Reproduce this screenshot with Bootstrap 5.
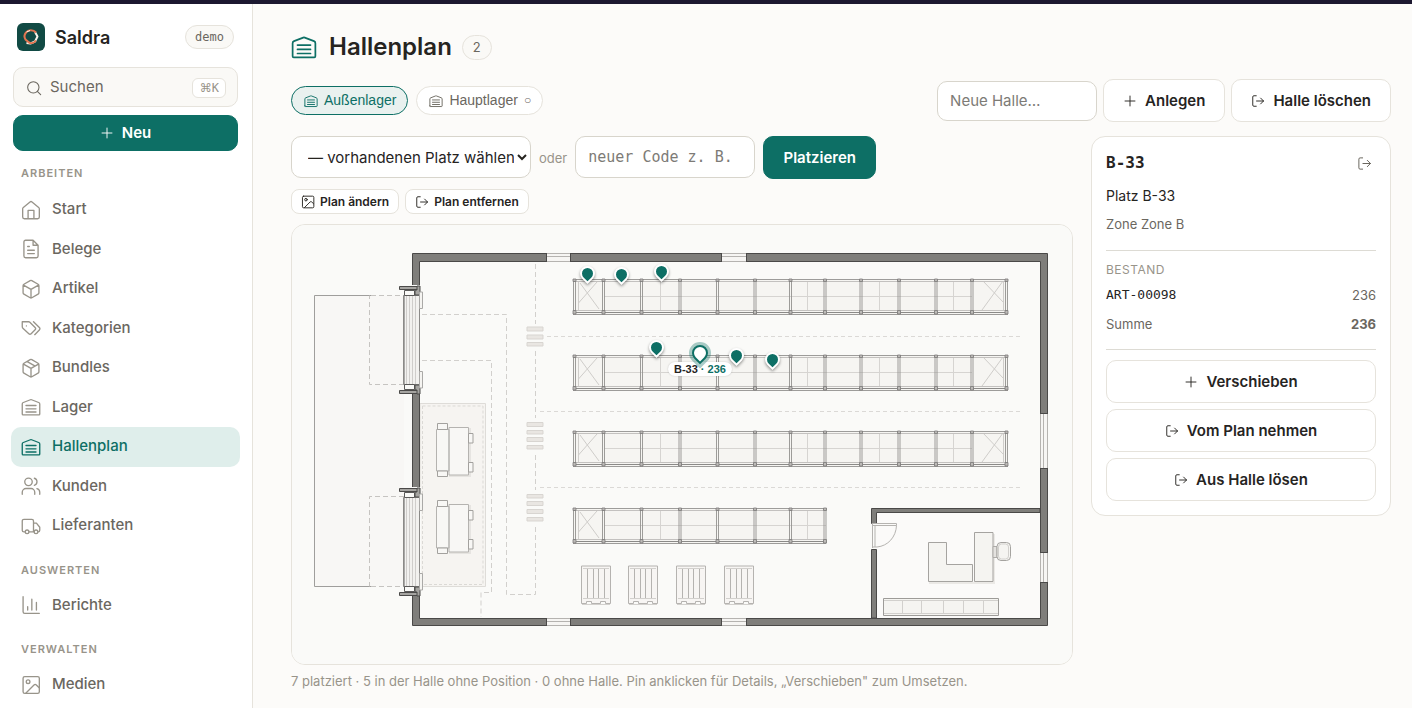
<!DOCTYPE html>
<html lang="de">
<head>
<meta charset="utf-8">
<meta name="viewport" content="width=device-width, initial-scale=1">
<title>Hallenplan · Saldra</title>
<link href="https://cdn.jsdelivr.net/npm/bootstrap@5.3.0/dist/css/bootstrap.min.css" rel="stylesheet">
<style>
:root{--teal:#0d6f65;--ink:#26241f;--muted:#6b675f;--faint:#98948a;--line:#e6e3dc;--line2:#d8d5cc;--paper:#fcfbf9}
body{font-family:Inter,"Open Sans",sans-serif;font-size:15px;line-height:1.5;color:var(--ink);background:var(--paper);border-top:4px solid #1c1830}
svg.ico{fill:none;stroke:currentColor;stroke-width:1.6;stroke-linecap:round;stroke-linejoin:round;flex:none}
.mono{font-family:"DejaVu Sans Mono","Liberation Mono",monospace}
.side{width:253px;background:#fff;border-right:1px solid var(--line);padding:19px 12px 0 11px;min-height:calc(100vh - 4px)}
.brand-row{padding:0 6px;gap:10px;height:28px}
.brand-name{font-size:18px;font-weight:600;color:var(--ink)}
.tagpill{border:1px solid var(--line);background:#faf9f6;color:var(--muted);font-size:12px;line-height:22px;padding:0 9px}
.search{width:calc(100% - 4px);margin:16px 2px 8px;height:40px;border:1px solid var(--line);background:#faf9f6;border-radius:10px;color:var(--muted);padding:1px 11px 0 12px;gap:8px;text-align:left}
.kbd-hint{border:1px solid var(--line);background:#fff;border-radius:6px;font-size:12px;line-height:18px;color:var(--faint);padding:0 6px 0 7px}
.kbd-hint b{font-family:"DejaVu Sans",sans-serif;font-weight:400}
.btn-teal{--bs-btn-bg:var(--teal);--bs-btn-color:#fff;--bs-btn-border-color:var(--teal);--bs-btn-hover-bg:#0a5d55;--bs-btn-hover-color:#fff;--bs-btn-border-radius:10px;--bs-btn-font-size:15px;--bs-btn-font-weight:600}
.btn-new{margin:0 2px;height:36px;gap:8px}
.btn-place{width:113px;height:43px;padding:1px 0 0}
.sec{font-size:11px;font-weight:600;letter-spacing:1px;line-height:17px;color:var(--faint);padding:16px 10px 7px;margin:0}
.sec-first{padding-top:14px;padding-bottom:8px}
.side .nav-link{display:flex;align-items:center;gap:11px;padding:8px 10px 9px;color:var(--muted);font-weight:500;border-radius:10px}
.side .nav-link svg{color:var(--faint);margin-top:1px}
.side .nav-link.active,.side .nav-link.active svg{color:var(--teal)}
.side .nav-link.active{background:#dfeeeb}
.content{padding:27px 21px 16px 38px}
h1{font-size:24px;font-weight:600;line-height:32px;margin:0 10px 0 12px}
.count{border:1px solid var(--line);background:#faf9f6;color:var(--muted);font-size:13px;line-height:23px;padding:0 10px}
.chip{font-family:"Liberation Sans",Arial,sans-serif;font-size:14px;line-height:27px;padding:0 11px 0 12px;border:1px solid var(--line);background:#fff;color:var(--muted);border-radius:16px;gap:6px}
.chip.on{background:#e9f1ef;border-color:var(--teal);color:var(--teal)}
.chip small{font-size:12px}
.field{border:1px solid var(--line2);border-radius:10px;background:#fff;font-size:15px;color:var(--ink);padding:0 12px;height:42px}
.field::placeholder{color:#7d7b76}
.field-hall{width:160px;height:40px}
.field-spot{width:240px;padding:1px 0 0 12px}
.field-code{width:180px}
.btn-line{--bs-btn-bg:#fff;--bs-btn-color:var(--ink);--bs-btn-border-color:var(--line);--bs-btn-hover-bg:#f5f3ee;--bs-btn-hover-border-color:var(--line2);--bs-btn-border-radius:10px;--bs-btn-font-size:15px;--bs-btn-font-weight:600;height:43px;gap:8px;padding:1px 19px 0}
.btn-mini{height:25px;font-size:12px;gap:5px;padding:0 9px;--bs-btn-border-radius:8px}
.gap-6{gap:6px}
.workarea{display:grid;grid-template-columns:minmax(0,1fr) 300px;gap:18px;margin-top:14px}
.hint{font-size:13px;line-height:20px;color:var(--faint)}
.plan{position:relative;border:1px solid var(--line);border-radius:14px;background:#fafaf8;margin:10px 0 6px;overflow:hidden}
.plan>svg{display:block;width:100%}
.pin{position:absolute;width:15px;height:15px;margin:-8px 0 0 -8px;padding:0;background:var(--teal);border:2px solid #fff;border-radius:50% 50% 0 50%;transform:rotate(45deg);box-shadow:1px 1px 3px #0006}
.pin.sel{width:16px;height:16px;background:#fff;border-color:var(--teal);box-shadow:0 0 0 3px #0d6f6559}
.pin-label{position:absolute;transform:translate(-50%,-50%);font:bold 11px/14px "Liberation Sans",Arial,sans-serif;background:#fff;border-radius:7px;padding:0 6px;white-space:nowrap;box-shadow:0 0 2px #0003}
.pin-label span{color:var(--teal)}
.detail{border:1px solid var(--line);border-radius:14px;background:#fff;padding:14px}
.detail hr{margin:0;border-color:#d5d2c9;opacity:.8}
.detail h2{font-size:16px;line-height:24px;font-weight:700;margin:0}
.txt14{font-size:14px;line-height:21px}
.txt13{font-size:13px;line-height:20px}
.overline{font-size:12px;line-height:20px;letter-spacing:.5px;color:var(--faint)}
.muted{color:var(--muted)}
</style>
</head>
<body>
<svg width="0" height="0" class="d-block" aria-hidden="true">
<symbol id="i-hall" viewBox="0 0 24 24"><path d="M1.500 20.500v-12a2 2 0 0 1 1.300-1.900l8.500-3.300a2 2 0 0 1 1.400 0l8.500 3.300a2 2 0 0 1 1.300 1.900v12a1 1 0 0 1-1 1h-19a1 1 0 0 1-1-1zM6 10.200h12M6 14.200h12M6 18h12"/></symbol>
<symbol id="i-home" viewBox="0 0 24 24"><path d="M2 10.500a2 2 0 0 1 .8-1.600l8-6.600a2 2 0 0 1 2.400 0l8 6.600a2 2 0 0 1 .8 1.600v10a2 2 0 0 1-2 2h-16a2 2 0 0 1-2-2zM8.500 22v-9.500h7v9.500"/></symbol>
<symbol id="i-doc" viewBox="0 0 24 24"><path d="M14.500 1.500h-9a2 2 0 0 0-2 2v17a2 2 0 0 0 2 2h13a2 2 0 0 0 2-2v-13zM14.500 1.500v6h6M8 9h2M8 13.500h8M8 17.500h8"/></symbol>
<symbol id="i-box" viewBox="0 0 24 24"><path d="M21.500 8a2 2 0 0 0-1-1.700l-7.500-4.300a2 2 0 0 0-2 0L3.500 6.300a2 2 0 0 0-1 1.700v8.500a2 2 0 0 0 1 1.700l7.500 4.300a2 2 0 0 0 2 0l7.500-4.300a2 2 0 0 0 1-1.700zM3 7.300l9 5.200 9-5.200M12 22.500v-10"/></symbol>
<symbol id="i-bundle" viewBox="0 0 24 24"><path d="M21.500 8a2 2 0 0 0-1-1.700l-7.500-4.300a2 2 0 0 0-2 0L3.500 6.300a2 2 0 0 0-1 1.700v8.500a2 2 0 0 0 1 1.700l7.500 4.300a2 2 0 0 0 2 0l7.500-4.300a2 2 0 0 0 1-1.700zM3 7.300l9 5.200 9-5.200M12 22.500v-10M7.500 4.300l9 5.200"/></symbol>
<symbol id="i-tags" viewBox="0 0 24 24"><path d="M1.500 4.500h7.700a2 2 0 0 1 1.400.6l6.300 6.300a2 2 0 0 1 0 2.800l-4.700 4.700a2 2 0 0 1-2.800 0l-6.800-6.300a3.500 3.500 0 0 1-1.100-2.500zM15 4.500l7 7a2 2 0 0 1 0 2.800L16.500 20M6.500 9.500h.01"/></symbol>
<symbol id="i-users" viewBox="0 0 24 24"><circle cx="9" cy="7" r="4.500"/><path d="M1.500 22v-2.500a4.500 4.500 0 0 1 4.500-4.500h6a4.500 4.500 0 0 1 4.500 4.500V22M16 2.700a4.500 4.500 0 0 1 0 8.600M22.500 22v-2.500a4.500 4.500 0 0 0-3.400-4.300"/></symbol>
<symbol id="i-truck" viewBox="0 0 24 24"><path d="M5 19H3.500a2 2 0 0 1-2-2V6a2 2 0 0 1 2-2H13a2 2 0 0 1 2 2v13H9.500M15 8.500h3.500l4 5V17a2 2 0 0 1-2 2M15 19h1"/><circle cx="7.300" cy="19" r="2.200"/><circle cx="18" cy="19" r="2.200"/></symbol>
<symbol id="i-chart" viewBox="0 0 24 24"><path d="M2.500 2v18a2 2 0 0 0 2 2H22M8 18v-4M13 18V5M18.500 18V9"/></symbol>
<symbol id="i-img" viewBox="0 0 24 24"><rect x="2.500" y="2" width="19.500" height="20" rx="2"/><circle cx="8.500" cy="8" r="2.200"/><path d="M21.500 15l-3.100-3.100a2 2 0 0 0-2.800 0L6 21.500"/></symbol>
<symbol id="i-exit" viewBox="0 0 24 24"><path d="M9 3H5a2 2 0 0 0-2 2v14a2 2 0 0 0 2 2h4M16.500 17l5-5-5-5M21.500 12H9.500"/></symbol>
<symbol id="i-plus" viewBox="0 0 24 24"><path d="M12 3.500v17M3.500 12h17"/></symbol>
<symbol id="i-find" viewBox="0 0 24 24"><circle cx="11" cy="11" r="8.500"/><path d="M22 22l-5-5"/></symbol>
</svg>

<div class="d-flex">
<aside class="side flex-shrink-0">
  <div class="brand-row d-flex align-items-center">
    <svg width="28" height="28" viewBox="0 0 28 28" aria-hidden="true"><rect width="28" height="28" rx="6" fill="#114a44"/><path d="M18 9 20.500 13.500 18 18.500 13.500 20.500 9.500 20" fill="none" stroke="#fbf4ea" stroke-width="2" stroke-linejoin="round"/><path d="M19 9.500C16.500 6.500 11 6.600 9 9.500 7.300 11.500 7.300 14.500 8.500 16.500L12 19.500C14.500 20.800 17.500 19.500 19 17.500" fill="none" stroke="#e07450" stroke-width="2"/><path d="M9.500 9 13 7.500" stroke="#fbf4ea"/></svg>
    <span class="brand-name">Saldra</span>
    <span class="tagpill mono rounded-pill ms-auto">demo</span>
  </div>
  <button type="button" class="search d-flex align-items-center">
    <svg class="ico" width="16" height="16"><use href="#i-find"/></svg><span>Suchen</span><span class="kbd-hint mono ms-auto"><b>⌘</b>K</span>
  </button>
  <div class="d-grid"><button type="button" class="btn btn-teal btn-new d-flex align-items-center justify-content-center p-0"><svg class="ico" width="14" height="14"><use href="#i-plus"/></svg>Neu</button></div>
  <nav>
    <p class="sec sec-first">ARBEITEN</p>
    <div class="nav flex-column flex-nowrap">
      <a class="nav-link" href="#"><svg class="ico" width="20" height="20"><use href="#i-home"/></svg>Start</a>
      <a class="nav-link" href="#"><svg class="ico" width="20" height="20"><use href="#i-doc"/></svg>Belege</a>
      <a class="nav-link" href="#"><svg class="ico" width="20" height="20"><use href="#i-box"/></svg>Artikel</a>
      <a class="nav-link" href="#"><svg class="ico" width="20" height="20"><use href="#i-tags"/></svg>Kategorien</a>
      <a class="nav-link" href="#"><svg class="ico" width="20" height="20"><use href="#i-bundle"/></svg>Bundles</a>
      <a class="nav-link" href="#"><svg class="ico" width="20" height="20"><use href="#i-hall"/></svg>Lager</a>
      <a class="nav-link active" aria-current="page" href="#"><svg class="ico" width="20" height="20"><use href="#i-hall"/></svg>Hallenplan</a>
      <a class="nav-link" href="#"><svg class="ico" width="20" height="20"><use href="#i-users"/></svg>Kunden</a>
      <a class="nav-link" href="#"><svg class="ico" width="20" height="20"><use href="#i-truck"/></svg>Lieferanten</a>
    </div>
    <p class="sec">AUSWERTEN</p>
    <div class="nav flex-column"><a class="nav-link" href="#"><svg class="ico" width="20" height="20"><use href="#i-chart"/></svg>Berichte</a></div>
    <p class="sec">VERWALTEN</p>
    <div class="nav flex-column"><a class="nav-link" href="#"><svg class="ico" width="20" height="20"><use href="#i-img"/></svg>Medien</a></div>
  </nav>
</aside>

<main class="content flex-grow-1">
  <header class="d-flex align-items-center">
    <svg class="ico" width="26" height="26" style="color:var(--teal)"><use href="#i-hall"/></svg>
    <h1>Hallenplan</h1><span class="count rounded-pill">2</span>
  </header>
  <div class="d-flex flex-wrap align-items-center justify-content-between mt-3">
    <div class="d-flex gap-2">
      <button type="button" class="chip on d-flex align-items-center"><svg class="ico" width="14" height="14"><use href="#i-hall"/></svg>Außenlager</button>
      <button type="button" class="chip d-flex align-items-center"><svg class="ico" width="14" height="14"><use href="#i-hall"/></svg>Hauptlager <small>○</small></button>
    </div>
    <form class="d-flex align-items-center gap-6">
      <input class="field field-hall" type="text" placeholder="Neue Halle…" aria-label="Neue Halle">
      <button type="button" class="btn btn-line d-flex align-items-center"><svg class="ico" width="14" height="14"><use href="#i-plus"/></svg>Anlegen</button>
      <button type="button" class="btn btn-line d-flex align-items-center"><svg class="ico" width="14" height="14"><use href="#i-exit"/></svg>Halle löschen</button>
    </form>
  </div>

  <div class="workarea">
    <section>
      <form class="d-flex align-items-start gap-2">
        <select class="field field-spot" aria-label="Vorhandener Platz"><option>— vorhandenen Platz wählen —</option></select>
        <span class="hint align-self-center">oder</span>
        <input class="field field-code mono" type="text" placeholder="neuer Code z. B." aria-label="Neuer Code">
        <button type="button" class="btn btn-teal btn-place">Platzieren</button>
      </form>
      <div class="d-flex gap-6" style="margin-top:10px">
        <button type="button" class="btn btn-line btn-mini d-flex align-items-center"><svg class="ico" width="14" height="14"><use href="#i-img"/></svg>Plan ändern</button>
        <button type="button" class="btn btn-line btn-mini d-flex align-items-center"><svg class="ico" width="14" height="14"><use href="#i-exit"/></svg>Plan entfernen</button>
      </div>
      <div class="plan">
        <svg viewBox="292 225 780 439" fill="none" role="img" aria-label="Grundriss Außenlager">
          <defs>
            <g id="bays">
              <path d="M604 296.500H826M660.500 282V310M807.500 282V310" stroke="#d6d4d1"/>
              <path d="M578.500 282V311M597 282 578.500 303M580 283 599 309" stroke="#cfcdca"/>
              <path d="M573 279.500H826M573 314.500H826" stroke="#9d9c9a"/><path d="M573 281.500H826M573 310.500H826" stroke="#c3c1bf"/><path d="M573 312.500H826" stroke="#8b8a88"/>
            </g>
            <g id="post"><path d="M-1 0V35M1 0V35" stroke="#93928f" stroke-width=".9"/><path d="M-1.500 -.5h3v2.500h-3zM-1.500 31h3v3.500h-3z" stroke="#7b7a78" fill="#bcbab7" stroke-width=".8"/></g>
            <g id="posts"><use href="#post" x="574.500" y="279.500"/><use href="#post" x="603.500" y="279.500"/><use href="#post" x="641.500" y="279.500"/><use href="#post" x="680" y="279.500"/><use href="#post" x="717.500" y="279.500"/><use href="#post" x="755" y="279.500"/><use href="#post" x="790.500" y="279.500"/><use href="#post" x="825" y="279.500"/></g>
            <g id="rack">
              <rect x="574" y="280" width="434" height="34" fill="#f6f5f2"/>
              <use href="#bays"/>
              <path d="M826 296.500H972M879.500 282V310M953.500 282V310" stroke="#d6d4d1"/>
              <path d="M1003.500 282V311M983 281 1004 303M1003 281 982 310" stroke="#cfcdca"/>
              <path d="M826 279.500H1008M826 314.500H1008" stroke="#9d9c9a"/><path d="M826 281.500H1008M826 310.500H1008" stroke="#c3c1bf"/><path d="M826 312.500H1008" stroke="#8b8a88"/>
              <use href="#posts"/><use href="#post" x="861" y="279.500"/><use href="#post" x="899" y="279.500"/><use href="#post" x="936" y="279.500"/><use href="#post" x="972" y="279.500"/><use href="#post" x="1006.500" y="279.500"/>
            </g>
            <g id="jamb">
              <path d="M399.500 286.500h18v3h-18z" fill="#a5a4a1" stroke="#4b4a49"/>
              <path d="M404.500 290.500h10v5h-10z" fill="#fafaf8" stroke="#5a5958"/>
              <path d="M415 290v5h5v-9h-3v4z" fill="#a5a4a1" stroke="#4b4a49"/>
              <path d="M419.500 292h3v16.500h-3z" fill="#f5f4f1" stroke="#aaa9a7"/>
            </g>
            <g id="gate">
              <path d="M403.500 295.500h16v89h-16z" fill="#f2f1ef" stroke="#8b8a88"/>
              <path d="M406.500 296v88M409.500 296v88M412.500 296v88M415.500 296v88" stroke="#cfcdcb"/><path d="M404.500 296v88" stroke="#aaa9a7"/>
              <use href="#jamb"/><use href="#jamb" transform="matrix(1 0 0 -1 0 680)"/>
            </g>
            <g id="cart" stroke="#b5b3b0">
              <path d="M450 429h20v47h-20z" stroke="#e6e4e1" stroke-width="2"/>
              <path d="M436.500 429.500h12.500v41.500h-12.500zM449 427.500h19.500v47.500H449z" fill="#f8f7f5"/>
              <path d="M437.500 423.500h10v6h-10zM437.500 471h10v5.500h-10zM468.500 433.500h4.500v9.500h-4.500zM468.500 462.500h4.500v9.500h-4.500z" fill="#f8f7f5" stroke="#a3a19e"/>
            </g>
            <g id="pallet" stroke="#b5b3b0">
              <path d="M581.500 566h29v37.500h-5v-2h-5v2h-9v-2h-5v2h-5z" fill="#f7f5f3"/>
              <path d="M583 568.500h26M583 598.500h26M582 604.500h28" stroke="#d2d0cd"/>
              <path d="M587.500 569v29M593.500 569v29M598.500 569v29M604.500 569v29" stroke="#b5b3b0"/>
            </g>
          </defs>
          <rect x="292" y="225" width="780" height="439" fill="#fafaf8"/>
          <path d="M314.500 295.500H404v291h-89.500z" fill="#f8f7f5"/>
          <path d="M371 295.500H314.500v291H371" stroke="#9f9e9c"/>
          <path d="M371 295.500h33M404 384.500h-34.500v-89M371 586.500h33M404 496.500h-34.500v90" stroke="#c6c4c1" stroke-dasharray="5 3"/>
          <path d="M420 403.500h65.500v183H420z" fill="#f6f4f1" stroke="#dedcd8"/>
          <path d="M422.500 406h60.500v178.500h-60.500z" stroke="#dbd9d5" stroke-dasharray="3 2"/>
          <path d="M422 314.500H506.500V594.500H535.500V526M422 360.500H491.500V592.500H481V617M535.500 264V324M535.500 351V418M535.500 455V490" stroke="#d2d0cd" stroke-dasharray="5 3"/>
          <path d="M547 336.500H1022M540 411.500H1022M540 487.500H1022" stroke="#dbd9d6" stroke-dasharray="4 3"/>
          <path d="M527 327h16v4h-16zM527 335h16v4h-16zM527 342.500h16v3.500h-16zM527 422.500h16v4h-16zM527 430.500h16v3.500h-16zM527 437.500h16v4h-16zM527 445.500h16v3.500h-16zM527 494.500h16v3.500h-16zM527 501.500h16v4h-16zM527 509.500h16v4h-16zM527 517.500h16v3.500h-16z" fill="#e9e6e2" stroke="#d8d5d1"/>
          <path d="M412.500 253.500H1047.500V625.500H412.500zM419.500 261.500V618.500H1040.500V261.500z" fill="#7f7e7b" fill-rule="evenodd" stroke="#4a4948"/>
          <path d="M871.500 508.500H1040V512.500H876.500V523.500H871.500zM871.500 549.500H876.500V618H871.500z" fill="#7f7e7b" stroke="#4a4948"/>
          <path d="M877 513.500H1039.500V617.500H877z" fill="#fbfaf9"/>
          <path d="M547 253h23v9h-23zM722 253h24v9h-24zM547 618h23v8h-23zM722 618h24v8h-24zM1040 414h8v54h-8zM1040 553h8v29h-8z" fill="#f6f5f3"/>
          <path d="M547 253.500h23M547 256.500h23M547 261.500h23M722 253.500h24M722 256.500h24M722 261.500h24M547 618.500h23M547 621.500h23M547 625.500h23M722 618.500h24M722 621.500h24M722 625.500h24M1040.500 414v54M1043.500 414v54M1047.500 414v54M1040.500 553v29M1043.500 553v29M1047.500 553v29" stroke="#b5b3b0"/>
          <path d="M546.500 253v9M570.500 253v9M721.500 253v9M746.500 253v9M546.500 618v8M570.500 618v8M721.500 618v8M746.500 618v8M1040 413.500h8M1040 468.500h8M1040 552.500h8M1040 582.500h8" stroke="#4a4948"/>
          <path d="M411 285h10v109h-10zM411 487h10v108h-10z" fill="#fafaf8"/>
          <use href="#gate"/><use href="#gate" y="202"/>
          <use href="#cart"/><use href="#cart" y="77"/>
          <use href="#rack"/><use href="#rack" y="76"/><use href="#rack" y="152"/>
          <g transform="translate(0 229)"><rect x="574" y="280" width="252" height="34" fill="#f6f5f2"/><use href="#bays"/><use href="#posts"/></g>
          <use href="#pallet"/><use href="#pallet" x="47"/><use href="#pallet" x="95"/><use href="#pallet" x="143"/>
          <path d="M871 524h6v25h-6z" fill="#fafaf8"/>
          <path d="M872 523.500h24.500v2H872M896.500 525.500C896 537 888 546 877 547h-5M872.500 524v24M875 526v21" stroke="#b5b3b0"/>
          <path d="M929 583h65V534" stroke="#ebe9e6" stroke-width="2"/>
          <path d="M928.500 542.500h18v22h26v17h-44zM974.500 532.500h18.500v49h-18.500z" fill="#f5f4f1" stroke="#a5a3a0"/>
          <path d="M993 546.500h4v11h-4z" fill="#e4e2df" stroke="#aeaca9"/>
          <rect x="997" y="542.500" width="13.500" height="18" rx="4" fill="#f5f4f1" stroke="#a5a3a0"/><rect x="998.500" y="544" width="10" height="15" rx="3" stroke="#d2d0cd"/>
          <path d="M883.500 598.500h115v17h-115z" fill="#f5f4f1" stroke="#9d9b98"/><path d="M884 600.500h114M884 613.500h114M902.500 600v14M921.500 600v14M943.500 600v14M963.500 600v14M983.500 600v14" stroke="#d2d0cd"/>
        </svg>
        <button type="button" class="pin" aria-label="Pin A-11" style="left:37.9%;top:11.2%"></button>
        <button type="button" class="pin" aria-label="Pin A-12" style="left:42.3%;top:11.4%"></button>
        <button type="button" class="pin" aria-label="Pin A-13" style="left:47.4%;top:10.7%"></button>
        <button type="button" class="pin" aria-label="Pin B-32" style="left:46.8%;top:28%"></button>
        <button type="button" class="pin" aria-label="Pin B-34" style="left:57%;top:29.8%"></button>
        <button type="button" class="pin" aria-label="Pin B-35" style="left:61.7%;top:30.8%"></button>
        <span class="pin-label" style="left:52.3%;top:32.9%">B-33 <span>· 236</span></span>
        <button type="button" class="pin sel" aria-label="Pin B-33" style="left:52.3%;top:29.2%"></button>
      </div>
      <p class="hint m-0">7 platziert · 5 in der Halle ohne Position · 0 ohne Halle. Pin anklicken für Details, „Verschieben" zum Umsetzen.</p>
    </section>

    <aside class="detail align-self-start">
      <div class="d-flex align-items-center justify-content-between"><h2 class="mono">B-33</h2>
        <button type="button" class="btn p-0 border-0 d-flex muted me-1" aria-label="Schließen"><svg class="ico" width="15" height="15"><use href="#i-exit"/></svg></button></div>
      <div class="txt14" style="margin-top:10px">Platz B-33</div>
      <div class="txt13 muted mt-2 mb-3">Zone Zone B</div>
      <hr>
      <div class="overline" style="margin-top:9px">BESTAND</div>
      <div class="txt13 d-flex justify-content-between" style="margin-top:5px"><span class="mono">ART-00098</span><span class="muted">236</span></div>
      <div class="txt13 muted d-flex justify-content-between" style="margin:9px 0 15px"><span>Summe</span><b>236</b></div>
      <hr>
      <div class="d-grid gap-6" style="margin-top:10px">
        <button type="button" class="btn btn-line d-flex align-items-center justify-content-center"><svg class="ico" width="14" height="14"><use href="#i-plus"/></svg>Verschieben</button>
        <button type="button" class="btn btn-line d-flex align-items-center justify-content-center"><svg class="ico" width="14" height="14"><use href="#i-exit"/></svg>Vom Plan nehmen</button>
        <button type="button" class="btn btn-line d-flex align-items-center justify-content-center"><svg class="ico" width="14" height="14"><use href="#i-exit"/></svg>Aus Halle lösen</button>
      </div>
    </aside>
  </div>
</main>
</div>
<script src="https://cdn.jsdelivr.net/npm/bootstrap@5.3.0/dist/js/bootstrap.bundle.min.js"></script>
</body>
</html>
